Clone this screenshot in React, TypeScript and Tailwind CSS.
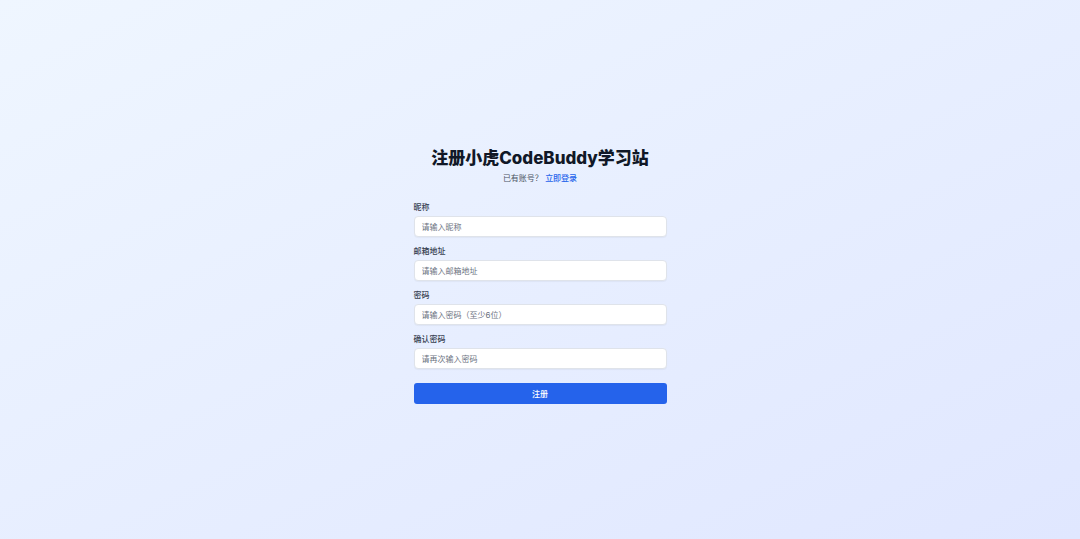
import React from "react";

const fields = [
  { label: "昵称", placeholder: "请输入昵称", type: "text" },
  { label: "邮箱地址", placeholder: "请输入邮箱地址", type: "email" },
  { label: "密码", placeholder: "请输入密码（至少6位）", type: "password" },
  { label: "确认密码", placeholder: "请再次输入密码", type: "password" },
];

export default function App() {
  return (
    <div
      className="min-h-screen bg-gradient-to-br from-[#eff6ff] to-[#e0e7ff] pt-[148px]"
      style={{ fontFamily: 'Inter, "Noto Sans CJK SC", sans-serif' }}
    >
      <div className="mx-auto w-[253px]">
        <h1 className="text-center text-[17px] leading-[20px] font-extrabold text-[#111827]">
          注册小虎CodeBuddy学习站
        </h1>
        <p className="mt-[4px] text-center text-[8px] leading-[12px] text-[#4b5563]">
          已有账号？{" "}
          <a href="#" className="font-medium text-[#2563eb]">
            立即登录
          </a>
        </p>

        <form className="mt-[17px] flex flex-col gap-[8px]" onSubmit={(e) => e.preventDefault()}>
          {fields.map((f) => (
            <div key={f.label}>
              <label className="block text-[8px] leading-[12px] font-medium text-[#374151]">{f.label}</label>
              <input
                type={f.type}
                placeholder={f.placeholder}
                className="mt-[3px] block h-[21px] w-full rounded-[4px] border border-[#dfe3ea] bg-white px-[7px] text-[8px] text-[#111827] shadow-[0_1px_1px_rgba(0,0,0,0.04)] placeholder:text-[#6b7280] outline-none"
              />
            </div>
          ))}
          <button
            type="submit"
            className="mt-[6px] h-[21px] w-full rounded-[3px] bg-[#2563eb] text-[8px] font-medium text-white"
          >
            注册
          </button>
        </form>
      </div>
    </div>
  );
}
